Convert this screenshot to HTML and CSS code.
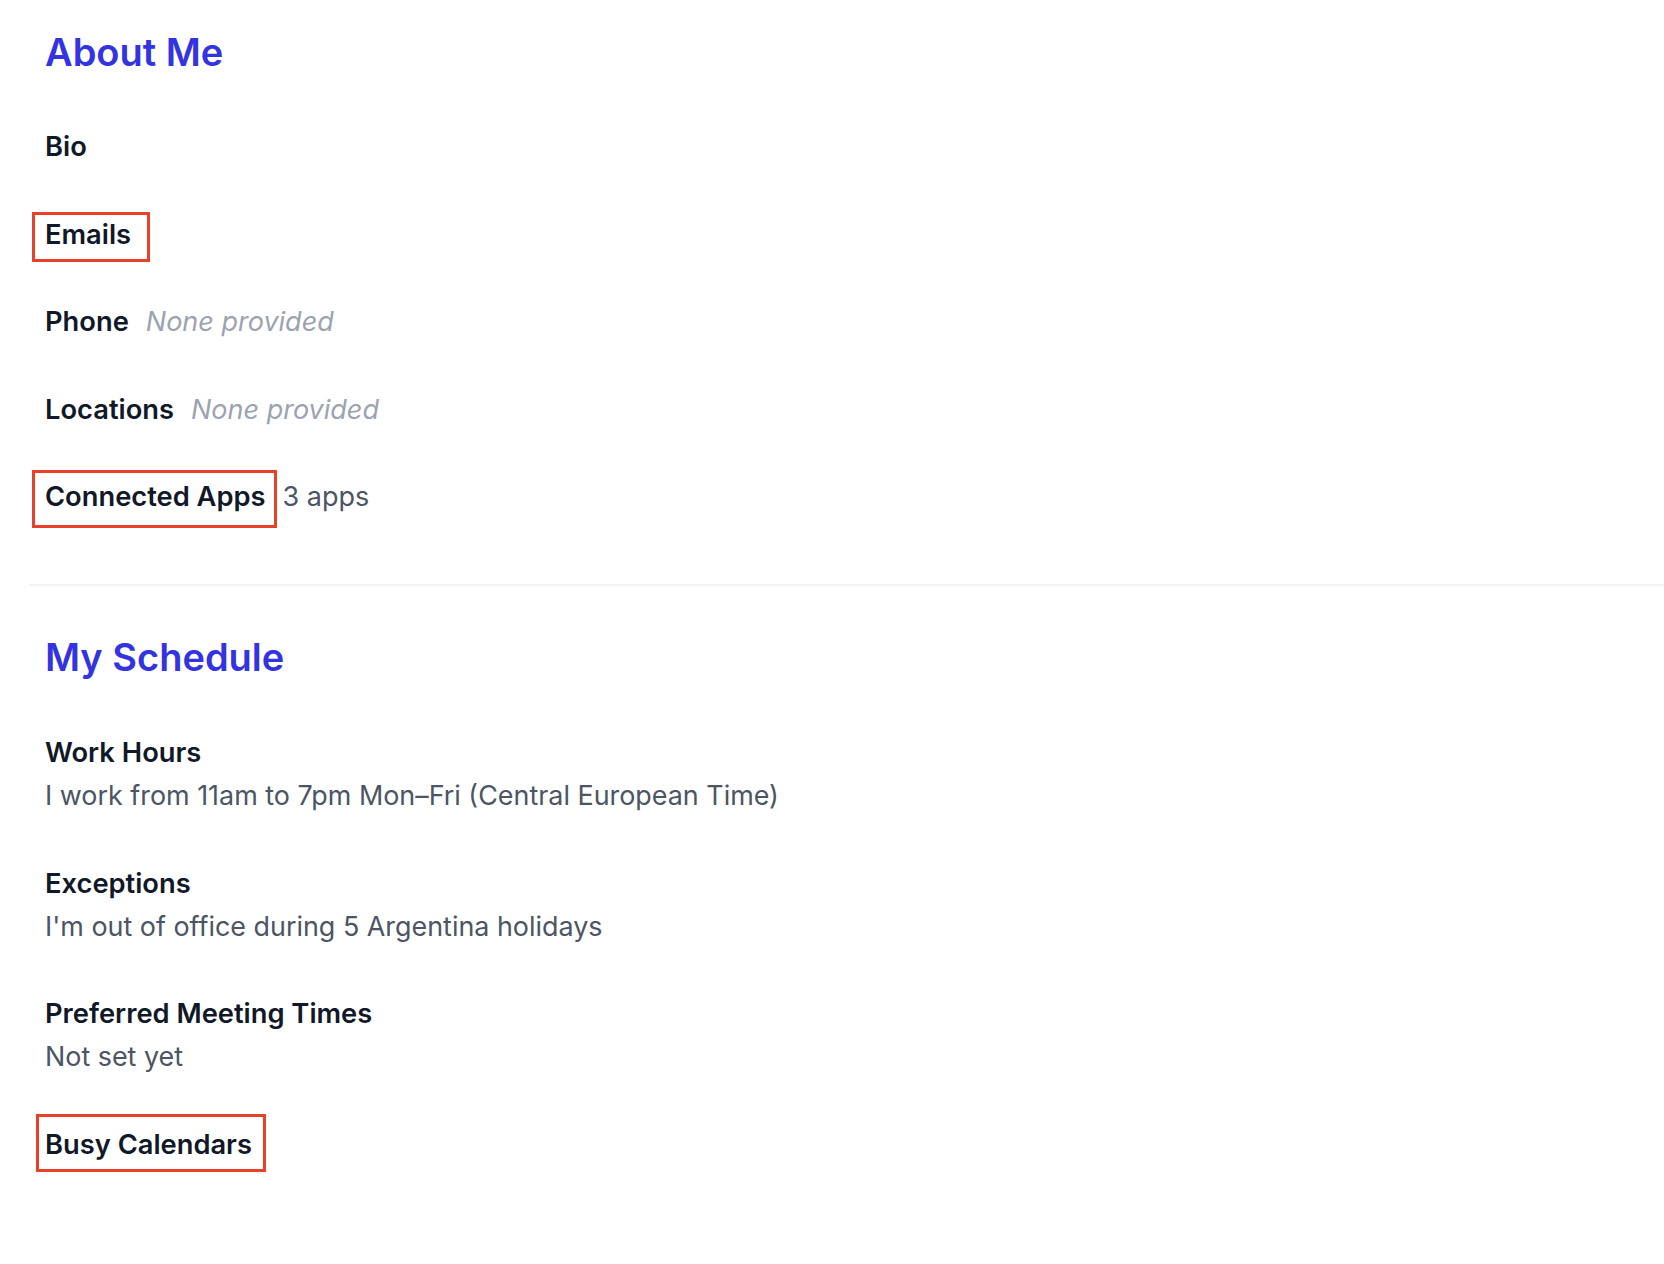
FILE: index.html
```html
<!DOCTYPE html>
<html lang="en">
<head>
  <meta charset="UTF-8" />
  <title>Profile</title>
  <link rel="stylesheet" href="styles.css">
</head>
<body>

  <main class="profile">

    <section class="block">
      <h2 class="block-title">About Me</h2>
      <div class="rows">
        <div class="row"><span class="label">Bio</span></div>
        <div class="row"><span class="label mark mark-emails">Emails</span></div>
        <div class="row"><span class="label">Phone</span><span class="empty">None provided</span></div>
        <div class="row"><span class="label">Locations</span><span class="empty">None provided</span></div>
        <div class="row"><span class="label mark mark-apps">Connected Apps</span><span class="value">3 apps</span></div>
      </div>
    </section>

    <hr class="divider">

    <section class="block">
      <h2 class="block-title">My Schedule</h2>
      <div class="rows">
        <div class="item">
          <span class="label">Work Hours</span>
          <span class="value">I work from 11am to 7pm Mon–Fri (Central European Time)</span>
        </div>
        <div class="item">
          <span class="label">Exceptions</span>
          <span class="value">I'm out of office during 5 Argentina holidays</span>
        </div>
        <div class="item">
          <span class="label">Preferred Meeting Times</span>
          <span class="value">Not set yet</span>
        </div>
        <div class="item">
          <span class="label mark mark-calendars">Busy Calendars</span>
        </div>
      </div>
    </section>

  </main>

</body>
</html>
```

FILE: styles.css
```css
body {
  font-family: Inter, 'Noto Sans', sans-serif;
  margin: 0;
  padding: 0;
  background: #fff;
  color: #111827;
}

.profile {
  padding: 28px 0 90px 29px;
}

.block {
  padding-left: 16px;
}

.block-title {
  margin: 0 0 49px;
  font-size: 38px;
  line-height: 48px;
  font-weight: 600;
  color: #3333e0;
}

.block + .divider + .block .block-title {
  margin-bottom: 50px;
}

.rows {
  display: flex;
  flex-direction: column;
  gap: 44.5px;
}

.row {
  display: flex;
  align-items: baseline;
  gap: 17px;
}

.item {
  display: flex;
  flex-direction: column;
  align-items: flex-start;
}

.label,
.value,
.empty {
  font-size: 27px;
  line-height: 43px;
}

.label {
  font-size: 27.3px;
  font-weight: 600;
  color: #111827;
}

.value {
  color: #4b5563;
}

.item .value {
  font-size: 26.9px;
}

.empty {
  color: #9ca3af;
  font-style: italic;
}

.divider {
  margin: 66px 0 47px;
  border: none;
  border-top: 2px solid #f3f3f3;
}

/* red review boxes drawn around some labels */
.mark {
  position: relative;
}

.mark::after {
  content: "";
  position: absolute;
  border: 3px solid #e8412a;
}

.mark-emails::after {
  left: -13px;
  right: -19px;
  top: -1px;
  bottom: -6px;
}

.mark-apps::after {
  left: -13px;
  right: -11px;
  top: -5px;
  bottom: -10px;
}

.mark-calendars::after {
  left: -9px;
  right: -14px;
  top: -9px;
  bottom: -6px;
}
```
